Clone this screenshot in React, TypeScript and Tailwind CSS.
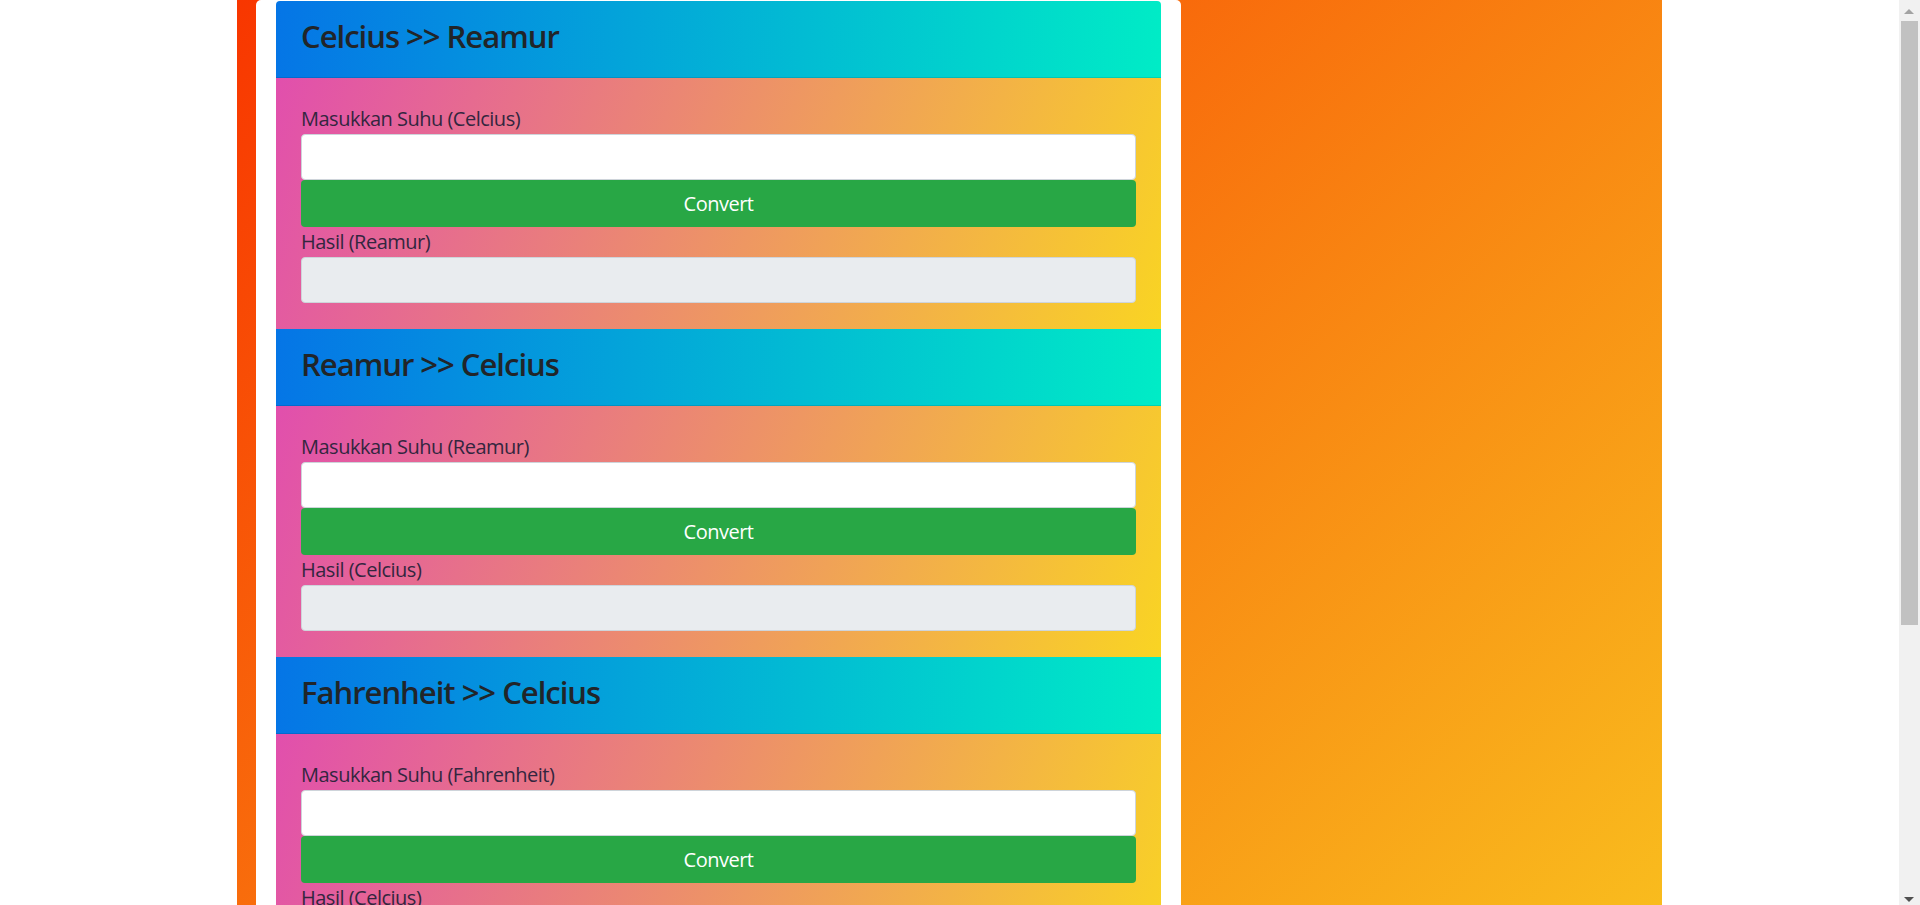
import { useState } from "react";

type Konversi = {
  judul: string;
  dari: string;
  ke: string;
  rumus: (n: number) => number;
};

const daftar: Konversi[] = [
  { judul: "Celcius >> Reamur", dari: "Celcius", ke: "Reamur", rumus: (c) => (c * 4) / 5 },
  { judul: "Reamur >> Celcius", dari: "Reamur", ke: "Celcius", rumus: (r) => (r * 5) / 4 },
  { judul: "Fahrenheit >> Celcius", dari: "Fahrenheit", ke: "Celcius", rumus: (f) => ((f - 32) * 5) / 9 },
  { judul: "Celcius >> Fahrenheit", dari: "Celcius", ke: "Fahrenheit", rumus: (c) => (c * 9) / 5 + 32 },
];

function KartuKonversi({ item, first }: { item: Konversi; first: boolean }) {
  const [input, setInput] = useState("");
  const [hasil, setHasil] = useState("");

  const convert = () => {
    const n = parseFloat(input);
    setHasil(isNaN(n) ? "" : String(item.rumus(n)));
  };

  return (
    <div>
      <div
        className={`h-[77px] border-b border-black/10 bg-linear-95/srgb from-[#0575e6] to-[#00ecc6] px-[25px] pt-[16px] ${
          first ? "rounded-t-[4px]" : ""
        }`}
      >
        <h2 className="text-[31px] leading-[38px] font-semibold tracking-[-1px] text-[#212529]">{item.judul}</h2>
      </div>
      <div className="bg-linear-110/srgb from-[#e14fad] to-[#f9d423] px-[25px] pt-[26px] pb-[26px]">
        <label className="block text-[20px] leading-[30px] tracking-[-0.5px] text-[#33263f]">
          Masukkan Suhu ({item.dari})
        </label>
        <input
          value={input}
          onChange={(e) => setInput(e.target.value)}
          className="block h-[46px] w-full rounded-[4px] border border-[#ced4da] bg-white px-4 text-[20px] text-[#495057] outline-none"
        />
        <button
          onClick={convert}
          className="block h-[47px] w-full rounded-[4px] bg-[#28a745] pt-px text-[20px] tracking-[-0.5px] text-white hover:bg-[#218838]"
        >
          Convert
        </button>
        <label className="block text-[20px] leading-[30px] tracking-[-0.5px] text-[#33263f]">Hasil ({item.ke})</label>
        <input
          value={hasil}
          readOnly
          className="block h-[46px] w-full rounded-[4px] border border-[#ced4da] bg-[#e9ecef] px-4 text-[20px] text-[#495057] outline-none"
        />
      </div>
    </div>
  );
}

// the browser's scrollbar in the screenshot
function Scrollbar() {
  return (
    <div className="fixed top-0 right-0 h-screen w-[21px] bg-[#f1f1f1]">
      <div className="absolute top-[9px] left-[5px] h-0 w-0 border-x-[5px] border-b-[5px] border-x-transparent border-b-[#a3a3a3]" />
      <div className="absolute top-[21px] left-[2px] h-[604px] w-[17px] bg-[#c1c1c1]" />
      <div className="absolute bottom-[3px] left-[5px] h-0 w-0 border-x-[5px] border-t-[5px] border-x-transparent border-t-[#505050]" />
    </div>
  );
}

export default function App() {
  return (
    <div className="min-h-screen bg-white pr-[21px] font-['Open_Sans',sans-serif]">
      <div className="mx-auto w-[1425px] bg-linear-to-br/srgb from-[#f83600] to-[#f9d423] pl-[19px]">
        <div className="w-[925px] rounded-t-[5px] bg-white px-5 pt-px">
          {daftar.map((item, i) => (
            <KartuKonversi key={item.judul} item={item} first={i === 0} />
          ))}
        </div>
      </div>
      <Scrollbar />
    </div>
  );
}
